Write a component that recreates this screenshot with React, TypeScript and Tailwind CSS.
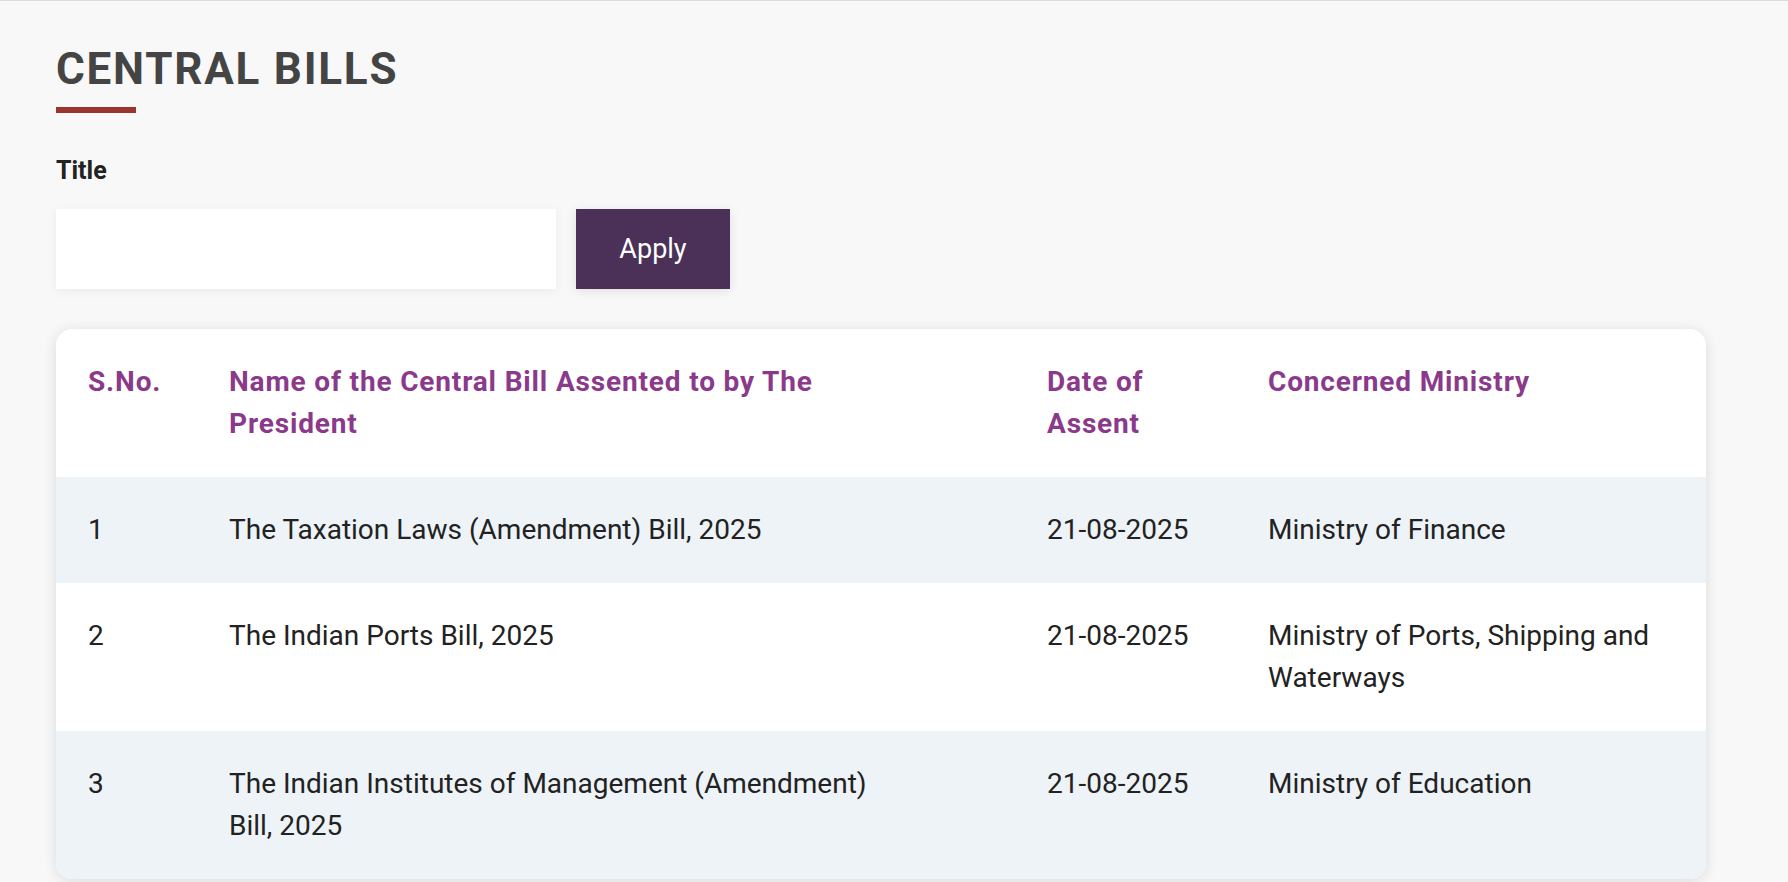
const rows = [
  { n: '1', name: 'The Taxation Laws (Amendment) Bill, 2025', date: '21-08-2025', min: 'Ministry of Finance' },
  { n: '2', name: 'The Indian Ports Bill, 2025', date: '21-08-2025', min: 'Ministry of Ports, Shipping and Waterways' },
  { n: '3', name: 'The Indian Institutes of Management (Amendment) Bill, 2025', date: '21-08-2025', min: 'Ministry of Education' },
]

export default function App() {
  return (
    <div className="min-h-screen bg-[#f8f8f8] border-t border-[#dcdcdc] overflow-hidden" style={{ fontFamily: 'Roboto, sans-serif', height: 882 }}>
      <div className="px-[56px] pt-[40px]">
        <h1 className="text-[44px] leading-[56px] font-bold tracking-[0.04em] text-[#444]">CENTRAL BILLS</h1>
        <div className="w-[80px] h-[6px] bg-[#9b3530] mt-[10px]" />
        <div className="mt-[42px] text-[25px] font-bold text-[#222] leading-[32px]">Title</div>
        <div className="mt-[22px] flex gap-[20px]">
          <input className="w-[500px] h-[80px] bg-white shadow-[0_2px_10px_rgba(0,0,0,0.06)] outline-none px-4 text-[20px]" />
          <button className="w-[154px] h-[80px] bg-[#4b3058] text-white text-[27px] shadow-[0_2px_10px_rgba(0,0,0,0.1)]">Apply</button>
        </div>
        <div className="mt-[40px] w-[1650px] bg-white rounded-[16px] shadow-[0_2px_14px_rgba(0,0,0,0.12)] overflow-hidden">
          <table className="w-full table-fixed text-left text-[28px] leading-[42px]">
            <colgroup>
              <col className="w-[141px]" />
              <col className="w-[818px]" />
              <col className="w-[221px]" />
              <col />
            </colgroup>
            <thead>
              <tr className="text-[#8b3a8b] font-bold align-top tracking-[0.03em]">
                <th className="px-8 py-[32px] font-bold">S.No.</th>
                <th className="px-8 py-[32px] pr-[100px] font-bold">Name of the Central Bill Assented to by The President</th>
                <th className="px-8 py-[32px] font-bold">Date of Assent</th>
                <th className="px-8 py-[32px] font-bold">Concerned Ministry</th>
              </tr>
            </thead>
            <tbody className="text-[#222]">
              {rows.map((r, i) => (
                <tr key={r.n} className={`align-top ${i % 2 === 0 ? 'bg-[#eef3f8]' : 'bg-white'}`}>
                  <td className="px-8 py-[32px]">{r.n}</td>
                  <td className="px-8 py-[32px] pr-[100px]">{r.name}</td>
                  <td className="px-8 py-[32px]">{r.date}</td>
                  <td className="px-8 py-[32px] pr-[16px]">{r.min}</td>
                </tr>
              ))}
            </tbody>
          </table>
        </div>
      </div>
    </div>
  )
}
